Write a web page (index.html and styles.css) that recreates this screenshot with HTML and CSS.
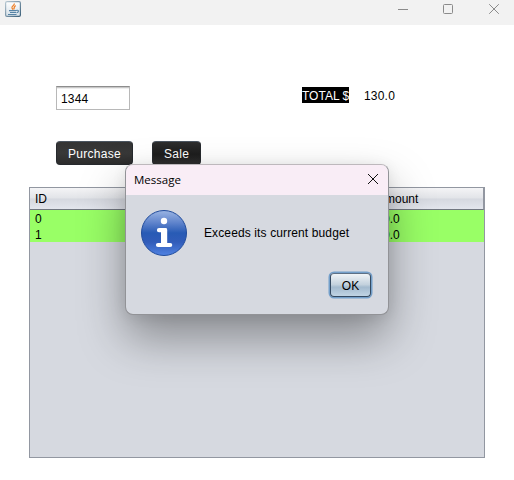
FILE: index.html
```
<!DOCTYPE html>
<html lang="en">
<head>
<meta charset="utf-8">
<title>Purchase</title>
<link rel="stylesheet" href="styles.css">
</head>
<body>
<header class="titlebar">
  <svg class="java" width="16" height="16" viewBox="0 0 16 16">
    <defs><linearGradient id="jb" x2="1" y2="1"><stop offset="0" stop-color="#b8c8d2"/><stop offset="1" stop-color="#3c607a"/></linearGradient>
    <linearGradient id="jf" x2="0" y2="1"><stop offset="0" stop-color="#fff"/><stop offset="1" stop-color="#d5e0e8"/></linearGradient></defs>
    <rect x=".6" y=".6" width="14.8" height="14.8" rx="1.4" fill="url(#jf)" stroke="url(#jb)" stroke-width="1.2"/>
    <path d="M9.2 2.500C10 4.500 6.300 5 7 7L8 8.700M10.800 4.700C8.500 5.600 9.800 6.700 8.700 8.400" fill="none" stroke="#ee832e" stroke-width="1.300"/>
    <path d="M4 9.600h7M5 11.500h6M3 13.500h8.500M11 9.500c4-1 2.500 2 .5 2.200" fill="none" stroke="#5683a5" stroke-width="1.100"/>
  </svg>
  <svg class="controls" width="102" height="12" viewBox="0 0 102 12" fill="none" stroke="#8b8b8b">
    <path d="M0 6.500h10"/>
    <rect x="45.500" y="1.500" width="9" height="9" rx="1"/>
    <path d="M91.200 1.200l9.600 9.600m0-9.600l-9.600 9.600"/>
  </svg>
</header>
<main class="content">
  <div class="fields">
    <div class="input">1344</div>
    <span class="total">TOTAL $</span>
    <span class="sum">130.0</span>
  </div>
  <div class="actions">
    <button class="dark purchase">Purchase</button>
    <button class="dark sale">Sale</button>
  </div>
  <div class="table">
    <div class="row head"><span>ID</span><span>Amount</span></div>
    <div class="row"><span>0</span><span class="num">0.0</span></div>
    <div class="row"><span>1</span><span class="num">0.0</span></div>
  </div>
</main>
<section class="dialog">
  <div class="dialog-bar">
    <span class="dialog-title">Message</span>
    <svg width="12" height="12" viewBox="0 0 12 12" fill="none" stroke="#111"><path d="M1 1l10 10M11 1L1 11"/></svg>
  </div>
  <div class="dialog-body">
    <svg width="46" height="46" viewBox="0 0 46 46">
      <defs><linearGradient id="ball" x2="0" y2="1"><stop offset="0" stop-color="#9bb5e3"/><stop offset=".28" stop-color="#5d82cb"/><stop offset=".5" stop-color="#285bb5"/><stop offset=".7" stop-color="#315cb9"/><stop offset="1" stop-color="#5082e2"/></linearGradient></defs>
      <circle cx="23" cy="23" r="22.500" fill="url(#ball)" stroke="#214c9c"/>
      <circle cx="23" cy="11" r="3.200" fill="#fff"/>
      <path d="M18 20.200h6M17 35h12.200" fill="none" stroke="#fff" stroke-width="4.200" stroke-linecap="round"/>
      <path d="M20 18.100h4.500a1.700 1.700 0 0 1 1.700 1.700V36H20z" fill="#fff"/>
    </svg>
    <span class="message">Exceeds its current budget</span>
  </div>
  <div class="dialog-foot"><button class="ok">OK</button></div>
</section>
</body>
</html>
```
FILE: styles.css
```
* { box-sizing: border-box; }
body {
  margin: 0;
  width: 514px;
  height: 480px;
  overflow: hidden;
  position: relative;
  background: #fff;
  color: #000;
  font: 12px/16px "Liberation Sans", Arial, sans-serif;
}
button { font: inherit; padding: 0; }
.titlebar {
  height: 25px;
  padding: 1px 14px 0 5px;
  display: flex;
  justify-content: space-between;
  background: #f2f2f2;
}
.controls { margin-top: 2px; }
.content { padding: 61px 29px 0; }
.fields { display: flex; height: 24px; padding-left: 27px; }
.input {
  width: 74px;
  height: 24px;
  padding: 4px;
  border: 1px solid #b8b8b8;
  border-top-color: #8d8d8d;
  box-shadow: inset 0 1px #c8c8c8, inset 0 2px #eee;
  letter-spacing: .2px;
}
.total {
  width: 47px;
  height: 16px;
  margin: 1px 15px 0 172px;
  background: #000;
  color: #fff;
  white-space: nowrap;
  line-height: 18px;
}
.sum { margin-top: 2px; letter-spacing: .2px; }
.actions { display: flex; gap: 19px; padding: 31px 0 0 27px; }
.dark {
  height: 24px;
  padding-top: 2px;
  border: 1px solid #26292d;
  border-top-color: #4b5560;
  border-radius: 4px;
  background: linear-gradient(#343434, #383838 50%, #2c2c2c);
  color: #fff;
  letter-spacing: .3px;
}
.purchase { width: 77px; }
.sale { width: 49px; background: linear-gradient(#2e2e2e, #1d1d1d 55%, #303030); }
.table {
  height: 271px;
  margin-top: 22px;
  border: 1px solid #9297a1;
  background: #d6d9e0;
}
.row {
  display: grid;
  grid-template-columns: 342px 1fr;
  height: 16px;
  padding-left: 5px;
  line-height: 18px;
  background: #99ff66;
}
.head {
  height: 22px;
  line-height: 22px;
  border-bottom: 1px solid #717780;
  border-right: 1px solid #9297a1;
  background: linear-gradient(#f4f4f6, #e2e4e8 48%, #d5d8df 52%, #e3e6ed);
}
.num { padding-left: 6px; }
.dialog {
  position: absolute;
  left: 125px;
  top: 164px;
  width: 264px;
  height: 151px;
  border: 1px solid #929397;
  border-top-color: #bdb8bc;
  border-radius: 8px;
  background: #d6d9e0;
  background-clip: padding-box;
  box-shadow: 0 23px 46px rgba(0, 0, 0, .36), 0 2px 14px rgba(0, 0, 0, .08);
}
.dialog-bar {
  display: flex;
  align-items: center;
  justify-content: space-between;
  height: 30px;
  padding: 0 9px 0 8px;
  border-radius: 7px 7px 0 0;
  background: #f9edf6;
}
.dialog-title { font: 11.500px/30px "Open Sans", sans-serif; }
.dialog-bar svg { margin-top: -2px; }
.dialog-body { display: flex; align-items: center; gap: 17px; padding: 15px 0 0 15px; }
.message { letter-spacing: .12px; }
.dialog-foot { display: flex; justify-content: flex-end; padding: 17px 17px 0 0; }
.ok {
  width: 41px;
  height: 24px;
  padding-top: 2px;
  border: 1px solid #344a62;
  border-top-color: #5d7085;
  border-radius: 4px;
  background: linear-gradient(#f0f4f7, #c3d1dd 48%, #a3bace 60%, #c0d4e4);
  box-shadow: 0 0 0 1.500px #739fca;
  color: #000;
}
```
